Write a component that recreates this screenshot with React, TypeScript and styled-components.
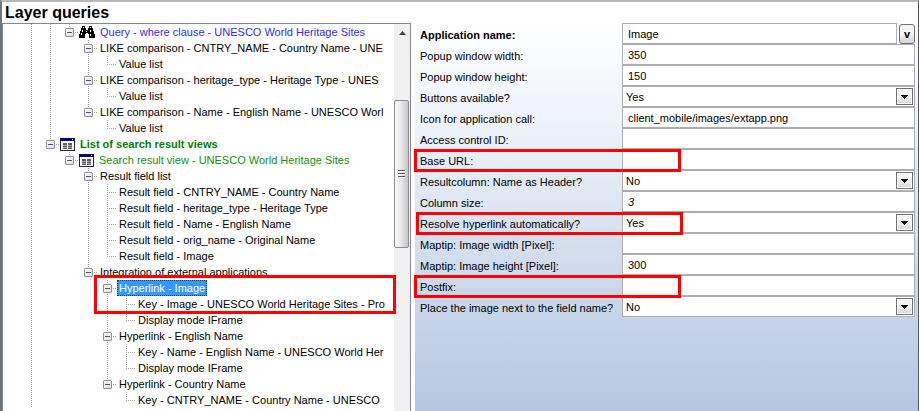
import React from "react";
import styled, { createGlobalStyle, css } from "styled-components";

const GlobalStyle = createGlobalStyle`
  *, *::before, *::after { box-sizing: border-box; }
  body {
    margin: 0;
    background: #fff;
    color: #000;
    font: 11px/16px "Liberation Sans", Arial, sans-serif;
  }
  button, input, select { font: inherit; color: inherit; }
`;

const Window = styled.div`
  display: flex;
  flex-direction: column;
  min-height: 100vh;
  border-top: 2px solid #b9b9b9;
  border-left: 2px solid #74747c;
  border-right: 1px solid #4a5878;
`;

const Title = styled.h1`
  margin: 0;
  padding-left: 3px;
  font-size: 16px;
  line-height: 21px;
  font-weight: bold;
`;

const Columns = styled.div`
  flex: 1;
  display: grid;
  grid-template-columns: minmax(0, 409fr) minmax(0, 503fr);
  column-gap: 4px;
`;

const TreePanel = styled.section`
  display: flex;
  border: 1px solid #828790;
  border-bottom: 0;
`;

const Tree = styled.ul`
  flex: 1;
  min-width: 0;
  margin: 0;
  padding: 0 8px 0 19px;
  list-style: none;
`;

const TreeRow = styled.li`
  position: relative;
  display: flex;
  align-items: center;
  height: 16px;
`;

type Line = "none" | "full" | "up" | "down";

const dots = "repeating-linear-gradient(to bottom, #a0a0a0 0 1px, transparent 1px 2px)";
const dotsAcross = "repeating-linear-gradient(to right, #a0a0a0 0 1px, transparent 1px 2px)";

const GuideCell = styled.span<{ $line: Line; $stub?: boolean }>`
  flex: none;
  display: flex;
  align-items: center;
  justify-content: center;
  width: 19px;
  height: 16px;
  background-image: ${(p) => (p.$line === "none" ? "none" : dots)}, ${(p) => (p.$stub ? dotsAcross : "none")};
  background-repeat: no-repeat;
  background-size: 1px ${(p) => (p.$line === "full" ? "16px" : "8px")}, 10px 1px;
  background-position: 9px ${(p) => (p.$line === "down" ? "8px" : "0")}, 9px 8px;
`;

const Expander = styled.button`
  display: grid;
  place-items: center;
  width: 9px;
  height: 9px;
  padding: 0;
  border: 1px solid #919191;
  border-radius: 1px;
  background: linear-gradient(135deg, #fff, #dcdcdc);

  &::before {
    content: "";
    width: 5px;
    height: 1px;
    background: #3c55a0;
  }
`;

type Tone = "plain" | "query" | "list" | "view" | "selected";

const toneStyles = {
  plain: css``,
  query: css`color: #2d2df5;`,
  list: css`color: #008000; font-weight: bold;`,
  view: css`color: #109010;`,
  selected: css`
    background: #3399ff;
    color: #fff;
    outline: 1px dotted #103c78;
    outline-offset: -1px;
  `,
};

const NodeLabel = styled.span<{ $tone: Tone; $icon: boolean }>`
  min-width: 0;
  margin-left: ${(p) => (p.$icon ? 3 : 0)}px;
  padding: 0 2px;
  overflow: hidden;
  white-space: nowrap;
  ${(p) => toneStyles[p.$tone]}
`;

const Icon = styled.svg`
  flex: none;
  display: block;
`;

const Binoculars = () => (
  <Icon width="16" height="14" viewBox="0 0 16 14" shapeRendering="crispEdges" aria-hidden="true">
    <path d="M3 1h3v2h1v2h2V3h1V1h3v2h1v3h1v3h1v4h-6V9H9V8H7v1H6v4H0V9h1V6h1V3h1z" fill="#000" />
    <path d="M4 2h1v1H4zM11 2h1v1h-1zM3 5h1v2H3zM11 5h1v2h-1zM2 8h1v2H2zM11 9h1v2h-1zM7 6h1v1H7z" fill="#fff" />
  </Icon>
);

const TableIcon = () => (
  <Icon width="15" height="13" viewBox="0 0 15 13" shapeRendering="crispEdges" aria-hidden="true">
    <rect width="15" height="13" fill="#22224c" />
    <rect width="15" height="3" fill="#00007c" />
    <rect x="12" y="1" width="1" height="1" fill="#fff" />
    <rect x="1" y="3" width="13" height="9" fill="#fff" />
    <path d="M3 5h4v6H3zM8 5h4v6H8z" fill="#5c5c62" />
    <path d="M3 7h4v1H3zM8 7h4v1H8zM3 9h4v1H3zM8 9h4v1H8z" fill="#a4a4aa" />
  </Icon>
);

const Highlight = styled.span<{ $area: "node" | "field" | "fieldInset" }>`
  position: absolute;
  z-index: 2;
  border: 3px solid #f00;
  pointer-events: none;
  ${(p) =>
    p.$area === "node"
      ? css`top: -5px; left: 72px; right: -10px; height: 39px;`
      : css`top: 0; left: ${p.$area === "fieldInset" ? 1 : -1}px; width: 267px; height: 23px;`}
`;

const ScrollBar = styled.div`
  flex: none;
  width: 16px;
  display: flex;
  flex-direction: column;
  background: #f0f0f0;
`;

const ScrollUp = styled.button`
  height: 18px;
  margin-bottom: 58px;
  padding: 0;
  border: 0;
  background: transparent;
  display: grid;
  place-items: center;
`;

const ScrollThumb = styled.div`
  width: 15px;
  height: 148px;
  border: 1px solid #8c8c8c;
  border-radius: 2px;
  background: linear-gradient(to right, #fafafa, #e9e9eb 45%, #c6c6ca);
  display: grid;
  place-items: center;
`;

interface TreeNode {
  label: string;
  /** One character per level: "." empty, "|" passing line, "t" branch, "l" last branch,
   *  "u" expander with a line above, "b" expander with a line above and below. */
  guides: string;
  tone?: Tone;
  icon?: "query" | "table";
  marked?: boolean;
}

const nodes: TreeNode[] = [
  { label: "Query - where clause - UNESCO World Heritage Sites", guides: "||u", tone: "query", icon: "query" },
  { label: "LIKE comparison - CNTRY_NAME - Country Name - UNE", guides: "||.b" },
  { label: "Value list", guides: "||.|l" },
  { label: "LIKE comparison - heritage_type - Heritage Type - UNES", guides: "||.b" },
  { label: "Value list", guides: "||.|l" },
  { label: "LIKE comparison - Name - English Name - UNESCO Worl", guides: "||.u" },
  { label: "Value list", guides: "||..l" },
  { label: "List of search result views", guides: "|u", tone: "list", icon: "table" },
  { label: "Search result view - UNESCO World Heritage Sites", guides: "|.u", tone: "view", icon: "table" },
  { label: "Result field list", guides: "|..b" },
  { label: "Result field - CNTRY_NAME - Country Name", guides: "|..|t" },
  { label: "Result field - heritage_type - Heritage Type", guides: "|..|t" },
  { label: "Result field - Name - English Name", guides: "|..|t" },
  { label: "Result field - orig_name - Original Name", guides: "|..|t" },
  { label: "Result field - Image", guides: "|..|l" },
  { label: "Integration of external applications", guides: "|..u" },
  { label: "Hyperlink - Image", guides: "|...b", tone: "selected", marked: true },
  { label: "Key - Image - UNESCO World Heritage Sites - Pro", guides: "|...|t" },
  { label: "Display mode IFrame", guides: "|...|l" },
  { label: "Hyperlink - English Name", guides: "|...b" },
  { label: "Key - Name - English Name - UNESCO World Her", guides: "|...|t" },
  { label: "Display mode IFrame", guides: "|...|l" },
  { label: "Hyperlink - Country Name", guides: "|...u" },
  { label: "Key - CNTRY_NAME - Country Name - UNESCO", guides: "|....l" },
];

const lineFor: Record<string, Line> = {
  ".": "none", "|": "full", t: "full", l: "up", u: "up", b: "full",
};

function Node({ node }: { node: TreeNode }) {
  return (
    <TreeRow role="treeitem" aria-level={node.guides.length} aria-selected={node.tone === "selected"}>
      {[...node.guides].map((g, i) => (
        <GuideCell key={i} $line={lineFor[g]} $stub={!".|".includes(g)}>
          {"ub".includes(g) && <Expander type="button" aria-label={`Collapse ${node.label}`} />}
        </GuideCell>
      ))}
      {node.icon === "query" && <Binoculars />}
      {node.icon === "table" && <TableIcon />}
      <NodeLabel $tone={node.tone ?? "plain"} $icon={!!node.icon}>{node.label}</NodeLabel>
      {node.marked && <Highlight $area="node" />}
    </TreeRow>
  );
}

const FormPanel = styled.form`
  padding: 0 3px 0 0;
  background: linear-gradient(to bottom, #fff, #e9eff8 32%, #d0dcec 62%, #b5c6e1);
`;

const FieldRow = styled.div`
  position: relative;
  display: grid;
  grid-template-columns: 207px minmax(0, 1fr);
  height: 21px;
`;

const FieldLabel = styled.label<{ $bold?: boolean }>`
  padding: 4px 0 0 5px;
  white-space: nowrap;
  font-weight: ${(p) => (p.$bold ? "bold" : "normal")};
`;

const Control = styled.div`
  position: relative;
  display: flex;
  gap: 2px;
`;

const boxStyles = css`
  flex: 1;
  min-width: 0;
  height: 21px;
  border: 1px solid #abadb3;
  border-radius: 0;
  background: #fff;
  outline: 0;
`;

const TextBox = styled.input<{ $italic?: boolean }>`
  ${boxStyles}
  padding: 0 5px;
  font-style: ${(p) => (p.$italic ? "italic" : "normal")};
`;

const SelectBox = styled.select`
  ${boxStyles}
  appearance: none;
  padding: 0 20px 0 3px;
`;

const DropArrow = styled.span`
  position: absolute;
  top: 2px;
  right: 2px;
  width: 17px;
  height: 17px;
  display: grid;
  place-items: center;
  border: 1px solid #707070;
  background: linear-gradient(to bottom, #f4f4f4 45%, #d4d4d4);
  box-shadow: inset 0 0 0 1px #fff;
  pointer-events: none;
`;

const MoreButton = styled.button`
  width: 16px;
  height: 20px;
  margin-top: 1px;
  padding: 0;
  border: 1px solid #707070;
  border-radius: 3px;
  background: linear-gradient(to bottom, #f4f4f4 45%, #d4d4d4);
  font-weight: bold;
`;

interface Field {
  id: string;
  label: string;
  value?: string;
  kind?: "select" | "named" | "italic";
  mark?: "field" | "fieldInset";
}

const fields: Field[] = [
  { id: "name", label: "Application name:", value: "Image", kind: "named" },
  { id: "width", label: "Popup window width:", value: "350" },
  { id: "height", label: "Popup window height:", value: "150" },
  { id: "buttons", label: "Buttons available?", value: "Yes", kind: "select" },
  { id: "icon", label: "Icon for application call:", value: "client_mobile/images/extapp.png" },
  { id: "access", label: "Access control ID:" },
  { id: "base", label: "Base URL:", mark: "field" },
  { id: "header", label: "Resultcolumn: Name as Header?", value: "No", kind: "select" },
  { id: "column", label: "Column size:", value: "3", kind: "italic" },
  { id: "resolve", label: "Resolve hyperlink automatically?", value: "Yes", kind: "select", mark: "fieldInset" },
  { id: "tipwidth", label: "Maptip: Image width [Pixel]:" },
  { id: "tipheight", label: "Maptip: Image height [Pixel]:", value: "300" },
  { id: "postfix", label: "Postfix:", mark: "field" },
  { id: "place", label: "Place the image next to the field name?", value: "No", kind: "select" },
];

function FormField({ field }: { field: Field }) {
  const { id, label, value = "", kind, mark } = field;
  return (
    <FieldRow>
      <FieldLabel htmlFor={id} $bold={kind === "named"}>{label}</FieldLabel>
      <Control>
        {kind === "select" ? (
          <>
            <SelectBox id={id} defaultValue={value}>
              <option>Yes</option>
              <option>No</option>
            </SelectBox>
            <DropArrow>
              <svg width="7" height="4" viewBox="0 0 7 4" shapeRendering="crispEdges" aria-hidden="true">
                <path d="M0 0h7v1H6v1H5v1H4v1H3V3H2V2H1V1H0z" />
              </svg>
            </DropArrow>
          </>
        ) : (
          <TextBox id={id} type="text" defaultValue={value} $italic={kind === "italic"} />
        )}
        {kind === "named" && <MoreButton type="button">v</MoreButton>}
      </Control>
      {mark && <Highlight $area={mark} />}
    </FieldRow>
  );
}

export default function App() {
  return (
    <>
      <GlobalStyle />
      <Window>
        <Title>Layer queries</Title>
        <Columns>
          <TreePanel>
            <Tree role="tree" aria-label="Layer queries">
              {nodes.map((node, i) => <Node key={i} node={node} />)}
            </Tree>
            <ScrollBar>
              <ScrollUp type="button" aria-label="Scroll up">
                <svg width="7" height="4" viewBox="0 0 7 4" aria-hidden="true">
                  <path d="M0 4L3.500 0L7 4z" fill="#404040" />
                </svg>
              </ScrollUp>
              <ScrollThumb>
                <svg width="7" height="8" viewBox="0 0 7 8" shapeRendering="crispEdges" aria-hidden="true">
                  <path d="M0 0h7v1H0zM0 3h7v1H0zM0 6h7v1H0z" fill="#55555a" />
                  <path d="M0 1h7v1H0zM0 4h7v1H0zM0 7h7v1H0z" fill="#fff" />
                </svg>
              </ScrollThumb>
            </ScrollBar>
          </TreePanel>
          <FormPanel>
            {fields.map((field) => <FormField key={field.id} field={field} />)}
          </FormPanel>
        </Columns>
      </Window>
    </>
  );
}
